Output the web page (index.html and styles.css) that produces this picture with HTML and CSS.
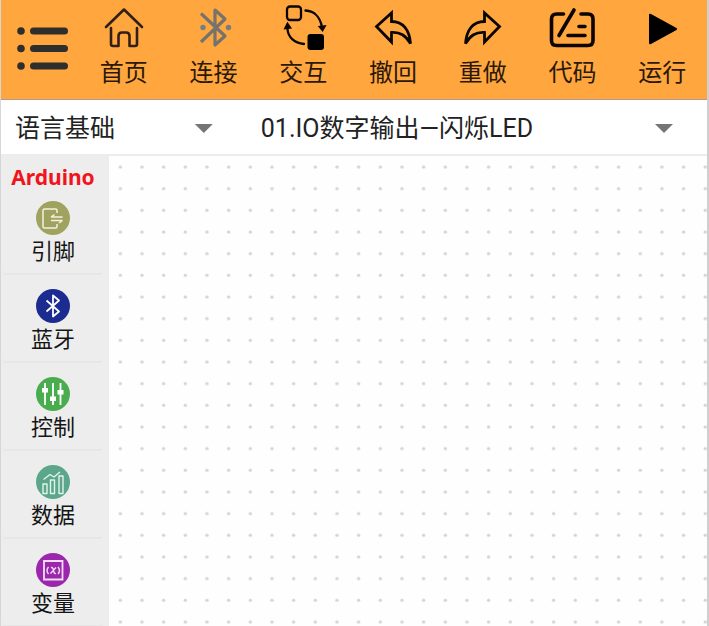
FILE: index.html
```html
<!DOCTYPE html>
<html lang="zh-CN">
<head>
<meta charset="utf-8">
<meta name="viewport" content="width=device-width, initial-scale=1">
<title>Arduino</title>
<link rel="stylesheet" href="styles.css">
</head>
<body>
<div class="app">
  <header class="toolbar">
    <button class="menu" type="button" aria-label="菜单">
      <svg width="54" height="46" viewBox="0 0 54 46" fill="#2e2e2c"><circle cx="6" cy="5" r="3.800"/><circle cx="6" cy="22.500" r="3.800"/><circle cx="6" cy="40" r="3.800"/><rect x="15" y="1.500" width="38" height="7" rx="3.500"/><rect x="15" y="19" width="38" height="7" rx="3.500"/><rect x="15" y="36.500" width="38" height="7" rx="3.500"/></svg>
    </button>
    <nav class="actions">
      <button class="action" type="button">
        <svg class="action-icon" viewBox="0 0 48 48" fill="none" stroke="#302018" stroke-width="2.600" stroke-linecap="round" stroke-linejoin="round"><path d="M6 22 24 4.500 42 22M11 23v16q0 2 2 2h5.500V31q0-3.500 3.500-3.500h4q3.500 0 3.500 3.500v10H35q2 0 2-2V23"/></svg>
        <span>首页</span>
      </button>
      <button class="action" type="button">
        <svg class="action-icon" viewBox="0 0 48 48" fill="none" stroke="#75736c" stroke-width="3.200" stroke-linejoin="round"><path d="M11 8.500 35 31 25 40V5l10 9L11 37"/><circle cx="13" cy="22.500" r="2.700" fill="#6f7f85" stroke="none"/><circle cx="38.500" cy="22.500" r="2.700" fill="#6f7f85" stroke="none"/></svg>
        <span>连接</span>
      </button>
      <button class="action" type="button">
        <svg class="action-icon" viewBox="0 0 48 48" fill="none" stroke="#0b0600" stroke-width="2.300" stroke-linecap="round"><rect x="8" y="1.500" width="14" height="13.500" rx="3"/><rect x="28.500" y="29" width="16.500" height="16" rx="3" fill="#000" stroke="none"/><path d="M26.500 5.500c9 .5 15 7 16.500 17M25 39C15 38 9 32 8.500 24"/><path d="m41 22 2.500 3 2-3.500zM6.500 23l2-4 2.500 3.500z" fill="#0b0600"/></svg>
        <span>交互</span>
      </button>
      <button class="action" type="button">
        <svg class="action-icon" viewBox="0 0 48 48" fill="none" stroke="#0b0600" stroke-width="2.800"><path d="M7.500 21.500 22.500 8v8.500c12 0 18 9 19 22-5-8-10-11.500-19-11V37z"/></svg>
        <span>撤回</span>
      </button>
      <button class="action" type="button">
        <svg class="action-icon" viewBox="0 0 48 48" fill="none" stroke="#0b0600" stroke-width="2.800"><path d="M40.500 21.500 25.500 8v8.500c-12 0-18 9-19 22 5-8 10-11.500 19-11V37z"/></svg>
        <span>重做</span>
      </button>
      <button class="action" type="button">
        <svg class="action-icon" viewBox="0 0 48 48" fill="none" stroke="#0b0600" stroke-width="3.600" stroke-linecap="round" stroke-linejoin="round"><path d="M15.500 9H8.500q-5 0-5 5v21.500q0 5 5 5H40q5 0 5-5V14q0-5-5-5h-7M26 5 11 30.500M31 21.500h6M20 30.500h17"/></svg>
        <span>代码</span>
      </button>
      <button class="action" type="button">
        <svg class="action-icon" viewBox="0 0 48 48"><path d="M11 10v28q0 2 2 1L38.500 25q1.500-1 0-2L13 9q-2-1-2 1z"/></svg>
        <span>运行</span>
      </button>
    </nav>
  </header>

  <div class="selectors">
    <div class="selector">
      <select aria-label="分类"><option>语言基础</option></select>
    </div>
    <div class="selector">
      <select aria-label="示例"><option>01.IO数字输出—闪烁LED</option></select>
    </div>
  </div>

  <main class="workspace">
    <aside class="sidebar">
      <h1 class="brand">Arduino</h1>
      <button class="category" type="button">
        <svg class="badge" viewBox="0 0 34 34"><circle cx="17" cy="17" r="17" fill="#a0a25f"/><g fill="none" stroke="#f2f2de" stroke-width="1.500" stroke-linejoin="round"><path d="M21 12V9.500Q21 8 19.500 8h-11Q7 8 7 9.500v16Q7 27 8.500 27h11q1.500 0 1.500-1.500V23M15 16h11.500M18.500 13.500 15 16M15 19.500h11.500M23 22l3.500-2.500"/></g></svg>
        <span>引脚</span>
      </button>
      <button class="category" type="button">
        <svg class="badge" viewBox="0 0 34 34"><circle cx="17" cy="17" r="17" fill="#1b2b90"/><path d="m10.500 11.500 12.500 11-6 5V6.500l6 5-12.500 11" fill="none" stroke="#fff" stroke-width="1.800" stroke-linejoin="round"/></svg>
        <span>蓝牙</span>
      </button>
      <button class="category" type="button">
        <svg class="badge" viewBox="0 0 34 34"><circle cx="17" cy="17" r="17" fill="#49ad50"/><path d="M9 6v22M17 6v22M24.500 6v22" stroke="#fff" stroke-width="1.800"/><path d="M6 11h6v4.500H6zM14 19.500h6V24h-6zM21.500 13h6v4.500h-6z" fill="#fff"/></svg>
        <span>控制</span>
      </button>
      <button class="category" type="button">
        <svg class="badge" viewBox="0 0 34 34"><circle cx="17" cy="17" r="17" fill="#5ca68c"/><path d="M7 19h4v9.500H7zM14.500 15h4v13.500h-4zM23 11h4v17.500h-4zM7.500 14.500l6.500-5 4 2.500 6-5" fill="none" stroke="#e2f4ec" stroke-width="1.400" stroke-linejoin="round"/></svg>
        <span>数据</span>
      </button>
      <button class="category" type="button">
        <svg class="badge" viewBox="0 0 34 34"><circle cx="17" cy="17" r="17" fill="#9b27ac"/><g fill="none" stroke="#f5def8" stroke-width="1.800"><path d="M8 8h18.500v18.500H8z"/><path d="M12.500 14q-3 3.500 0 7M22 14q3 3.500 0 7M15 14.500q2-.5 2.500 3t2.500 3M20 14.500l-5.500 6" stroke-width="1.400"/></g></svg>
        <span>变量</span>
      </button>
    </aside>
    <svg class="canvas" aria-hidden="true">
      <defs>
        <pattern id="dots" width="65" height="65" patternUnits="userSpaceOnUse" patternTransform="scale(.3333)">
          <circle cx="34" cy="33" r="5" fill="#d4d4d4"/>
        </pattern>
      </defs>
      <rect width="100%" height="100%" fill="url(#dots)"/>
    </svg>
  </main>
</div>
</body>
</html>
```

FILE: styles.css
```css
* {
  box-sizing: border-box;
}

body {
  margin: 0;
  background: #fff;
  color: #222;
  font-family: Roboto, "Noto Sans CJK SC", sans-serif;
}

button,
select {
  margin: 0;
  padding: 0;
  border: 0;
  background: none;
  color: inherit;
  font: inherit;
}

svg {
  display: block;
}

.app {
  display: flex;
  flex-direction: column;
  height: 100vh;
  overflow: hidden;
  border-left: 1px solid #d6d6d6;
  border-right: 2px solid #cfcfcf;
}

.toolbar {
  display: flex;
  flex: none;
  background: #ffa63f;
  border-bottom: 1px solid #b59a88;
}

.menu {
  display: flex;
  align-items: center;
  flex: none;
  padding: 0 0 2px 14px;
  width: 78px;
}

.actions {
  display: flex;
  flex: 1;
}

.action {
  display: flex;
  flex: 1;
  flex-direction: column;
  align-items: center;
  gap: 4px;
  padding: 5px 0 10px;
  color: #2a1808;
  font-size: 24px;
  line-height: 32px;
}

.action-icon {
  width: 48px;
  height: 48px;
}

.selectors {
  display: grid;
  grid-template-columns: 11fr 21fr;
  gap: 10px;
  flex: none;
  padding-right: 10px;
  border-bottom: 2px solid #ececec;
}

.selector {
  position: relative;
}

.selector select {
  appearance: none;
  width: 100%;
  height: 54px;
  padding: 2px 48px 0 14px;
  font-size: 25px;
}

.selector::after {
  content: "";
  position: absolute;
  top: 24px;
  right: 24px;
  width: 18px;
  height: 9px;
  background: #757575;
  clip-path: polygon(0 0, 100% 0, 50% 100%);
  pointer-events: none;
}

.workspace {
  display: flex;
  flex: 1;
  min-height: 0;
}

.sidebar {
  flex: none;
  width: 108px;
  padding: 0 6px 0 2px;
  background: #ededed;
}

.brand {
  margin: 0;
  padding: 6px 0 2px;
  color: #f0141c;
  font: bold 21px/30px "Noto Sans", sans-serif;
  text-align: center;
}

.category {
  display: flex;
  flex-direction: column;
  align-items: center;
  gap: 2px;
  width: 100%;
  height: 88px;
  padding-top: 14px;
  border-bottom: 2px solid #e6e6e6;
  border-radius: 4px;
  color: #151515;
  font-size: 22px;
  line-height: 30px;
}

.brand + .category {
  height: 81px;
  padding-top: 7px;
}

.badge {
  width: 34px;
  height: 34px;
}

.canvas {
  flex: 1;
  min-width: 0;
  height: 100%;
  background: #fefefe;
}
```
